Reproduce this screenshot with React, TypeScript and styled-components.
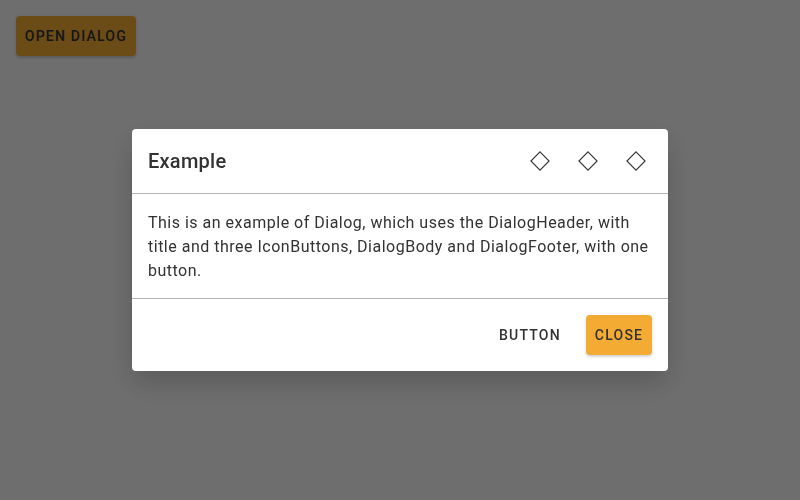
import React from 'react';
import styled, { createGlobalStyle, css } from 'styled-components';

const GlobalStyle = createGlobalStyle`
  *, *::before, *::after { box-sizing: border-box; }
  html, body { margin: 0; height: 100%; overflow: hidden; }
  body {
    font-family: Roboto, "Liberation Sans", sans-serif;
    color: #323232;
    background: #fff;
    -webkit-font-smoothing: antialiased;
  }
`;

const Page = styled.main`
  height: 500px;
  padding: 16px;
  background: #fafafa;
`;

const Button = styled.button<{ $filled?: boolean }>`
  height: 40px;
  padding: 0 8.8px;
  border: 0;
  border-radius: 4px;
  background: transparent;
  color: #323232;
  font: 500 14px/20px Roboto, sans-serif;
  letter-spacing: 1.22px;
  text-transform: uppercase;
  white-space: nowrap;
  ${(p) =>
    p.$filled &&
    css`
      background: #f4ab34;
      box-shadow:
        0 2px 2px rgba(0, 0, 0, 0.1),
        0 1px 4px rgba(0, 0, 0, 0.1);
    `}
`;

const Scrim = styled.div`
  position: fixed;
  inset: 0;
  display: flex;
  align-items: center;
  justify-content: center;
  background: rgba(0, 0, 0, 0.56);
`;

const Dialog = styled.section`
  width: 536px;
  border-radius: 4px;
  background: #fff;
  box-shadow: 0 12px 28px rgba(0, 0, 0, 0.18);
`;

const Header = styled.header`
  display: flex;
  align-items: center;
  justify-content: space-between;
  height: 65px;
  padding: 0 8px 0 16px;
  border-bottom: 1px solid #b4b4b4;
`;

const Title = styled.h2`
  margin: 0;
  font-size: 20px;
  font-weight: 500;
  line-height: 24px;
  letter-spacing: 0.25px;
`;

const Actions = styled.div`
  display: flex;
`;

const IconButton = styled.button`
  display: flex;
  align-items: center;
  justify-content: center;
  width: 48px;
  height: 48px;
  padding: 0;
  border: 0;
  background: transparent;
  color: #323232;
`;

const Body = styled.p`
  margin: 0;
  padding: 17px 16px 15px;
  font-size: 16px;
  line-height: 24px;
  letter-spacing: 0.5px;
`;

const Footer = styled.footer`
  display: flex;
  justify-content: flex-end;
  gap: 16.4px;
  padding: 16px;
  border-top: 1px solid #b4b4b4;
`;

const DiamondIcon = () => (
  <svg
    width="24"
    height="24"
    viewBox="0 0 24 24"
    fill="none"
    stroke="currentColor"
    strokeWidth="1.1"
  >
    <path d="M12 2.9 21.1 12 12 21.1 2.9 12Z" />
  </svg>
);

export default function App() {
  return (
    <>
      <GlobalStyle />
      <Page>
        <Button $filled>Open dialog</Button>
      </Page>
      <Scrim>
        <Dialog role="dialog" aria-label="Example">
          <Header>
            <Title>Example</Title>
            <Actions>
              {['first', 'second', 'third'].map((name) => (
                <IconButton key={name}>
                  <DiamondIcon />
                </IconButton>
              ))}
            </Actions>
          </Header>
          <Body>
            This is an example of Dialog, which uses the DialogHeader, with title and three
            IconButtons, DialogBody and DialogFooter, with one button.
          </Body>
          <Footer>
            <Button>Button</Button>
            <Button $filled>Close</Button>
          </Footer>
        </Dialog>
      </Scrim>
    </>
  );
}
